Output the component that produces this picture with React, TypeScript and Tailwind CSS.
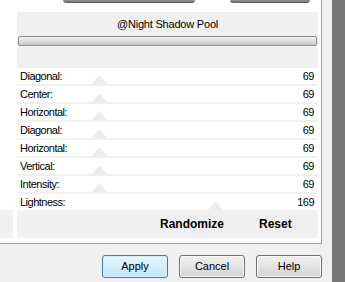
import React from "react";

const rows = [
  { label: "Diagonal:", value: 69 },
  { label: "Center:", value: 69 },
  { label: "Horizontal:", value: 69 },
  { label: "Diagonal:", value: 69 },
  { label: "Horizontal:", value: 69 },
  { label: "Vertical:", value: 69 },
  { label: "Intensity:", value: 69 },
  { label: "Lightness:", value: 169 },
];

function Thumb({ value }: { value: number }) {
  // faint trackbar thumb, position follows the value (0..255 across the row)
  const left = 2.5 + value * 1.16 - 7.5;
  return (
    <svg
      className="absolute bottom-0"
      style={{ left }}
      width="15"
      height="9"
      viewBox="0 0 15 9"
    >
      <polygon points="7.5,0 15,9 0,9" fill="#ececec" />
    </svg>
  );
}

function Button({ label, focused }: { label: string; focused?: boolean }) {
  return (
    <button
      className={`w-[66px] h-[23px] rounded-[3px] border text-[11px] text-black flex items-center justify-center ${
        focused
          ? "border-[#3c7fb1] bg-gradient-to-b from-[#eaf6fd] to-[#bee6fd] shadow-[inset_0_0_0_1px_#d6eefa]"
          : "border-[#707070] bg-gradient-to-b from-[#f2f2f2] to-[#d4d4d4] shadow-[inset_0_0_0_1px_#fbfbfb]"
      }`}
    >
      {label}
    </button>
  );
}

export default function App() {
  return (
    <div
      className="w-[345px] h-[282px] flex bg-[#f0f0f0] overflow-hidden"
      style={{ fontFamily: '"Liberation Sans", Arial, sans-serif' }}
    >
      <div className="w-[322px] flex flex-col">
        {/* Tab page */}
        <div className="w-[322px] h-[244px] bg-white border-r border-b border-[#a0a0a0] flex flex-col">
          {/* bottoms of the preview frames above */}
          <div className="h-[12px] flex">
            <div className="ml-[63px] w-[132px] h-[3px] rounded-b-[6px] bg-gradient-to-b from-[#9a9a9a] to-[#5a5a5a]"></div>
            <div className="ml-[35px] w-[80px] h-[3px] rounded-b-[6px] bg-gradient-to-b from-[#9a9a9a] to-[#5a5a5a]"></div>
          </div>

          <div className="flex">
            {/* left edge */}
            <div className="w-[17px] flex flex-col">
              <div className="h-[198px]"></div>
              <div className="h-[28px] w-[13px] bg-[#f0f0f0]"></div>
            </div>

            {/* settings panel */}
            <div className="w-[301px] bg-[#f0f0f0] flex flex-col">
              <div className="h-[24px] flex items-center justify-center text-[11px] tracking-[-0.2px] text-black">
                @Night Shadow Pool
              </div>
              <div className="mx-[1px] h-[10px] rounded-[2px] border border-[#8e8e8e] bg-gradient-to-b from-[#f0f0f0] to-[#c8c8c8]"></div>
              <div className="h-[22px]"></div>

              <div className="flex flex-col gap-[2px]">
                {rows.map((r, i) => (
                  <div
                    key={i}
                    className="relative h-[16px] bg-white flex items-center justify-between pl-[3px] pr-[4px] text-[11px] tracking-[-0.5px] text-black"
                  >
                    <Thumb value={r.value} />
                    <span className="relative">{r.label}</span>
                    <span className="relative">{r.value}</span>
                  </div>
                ))}
              </div>

              <div className="h-[28px] flex items-center text-[12px] font-bold text-black">
                <span className="ml-[143px]">Randomize</span>
                <span className="ml-[35px]">Reset</span>
              </div>
            </div>
          </div>
        </div>

        {/* dialog buttons */}
        <div className="flex justify-end gap-[11px] pt-[11px]">
          <Button label="Apply" focused />
          <Button label="Cancel" />
          <Button label="Help" />
        </div>
      </div>

      <div className="w-[10px]"></div>
      <div className="w-[13px] bg-[#777777]"></div>
    </div>
  );
}
